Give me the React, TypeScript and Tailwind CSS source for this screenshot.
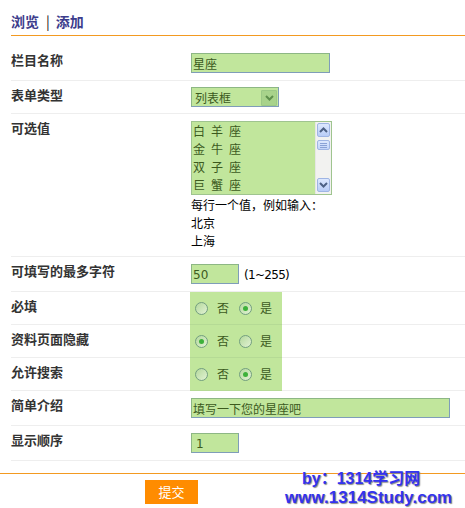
import type { ReactNode } from 'react'

const labelCls = 'w-[180px] shrink-0 pt-[6px] text-[13px] leading-[15px] font-bold text-[#333333]'
const rowCls = 'flex border-b border-[#eeeeee]'
const fieldCls =
  'h-[20px] flex items-center pl-[1px] pt-[1px] border border-t-[#8db784] border-l-[#8db784] border-b-[#7f9db9] border-r-[#7f9db9] bg-[#c1e69c] text-[12px] leading-[16px] text-[#3c5a1e]'

const zodiac = ['白羊座', '金牛座', '双子座', '巨蟹座']

const Radio = ({ checked }: { checked?: boolean }) => (
  <span className="flex h-[13px] w-[13px] items-center justify-center rounded-full border border-[#739e80] bg-gradient-to-br from-[#b4d99c] to-[#e2f2d4]">
    {checked && <span className="h-[5px] w-[5px] rounded-full bg-[#3db13a]" />}
  </span>
)

const RadioRow = ({ label, yes }: { label: string; yes: boolean }) => (
  <div className={`${rowCls} h-[33px]`}>
    <div className={labelCls}>{label}</div>
    <div className="-mb-px -ml-px flex w-[92px] items-center self-stretch border-b border-[#b5da95] bg-[#c1e69c] pl-[5px] text-[12px] text-[#3c5a1e]">
      <Radio checked={!yes} />
      <span className="ml-[9px]">否</span>
      <span className="ml-[10px]">
        <Radio checked={yes} />
      </span>
      <span className="ml-[8px]">是</span>
    </div>
  </div>
)

const Row = ({ label, className, children }: { label: string; className: string; children: ReactNode }) => (
  <div className={`${rowCls} ${className}`}>
    <div className={labelCls}>{label}</div>
    <div className="pt-[7px]">{children}</div>
  </div>
)

const Chevron = ({ up, color }: { up?: boolean; color: string }) => (
  <svg width="9" height="6" viewBox="0 0 9 6">
    <polyline
      points={up ? '1,5 4.5,1.5 8,5' : '1,1 4.5,4.5 8,1'}
      fill="none"
      stroke={color}
      strokeWidth="2"
    />
  </svg>
)

const ScrollBtn = ({ up }: { up?: boolean }) => (
  <div className="mx-[1px] flex h-[14px] items-center justify-center rounded-[2px] border border-[#9fb5e4] bg-gradient-to-b from-[#dde8fe] to-[#b9cdf7]">
    <Chevron up={up} color="#4d6185" />
  </div>
)

export default function App() {
  return (
    <div className="relative h-[508px] w-[465px] overflow-hidden bg-white font-['Noto_Sans_CJK_SC',sans-serif]">
      {/* 标题 */}
      <div className="ml-[11px] flex h-[35px] items-start pt-[13px] text-[14px] leading-[16px] font-bold text-[#3d3d8c]">
        <span>浏览</span>
        <span className="ml-[7px] font-normal text-[#111111]">|</span>
        <span className="ml-[6px]">添加</span>
      </div>
      <div className="ml-[11px] h-px bg-[#f39a21]" />

      <div className="ml-[11px] mt-[10px]">
        <Row label="栏目名称" className="h-[35px]">
          <div className={`${fieldCls} w-[139px]`}>星座</div>
        </Row>

        <div className={`${rowCls} h-[33px]`}>
          <div className={labelCls}>表单类型</div>
          <div className="pt-[6px]">
            <div className={`${fieldCls} w-[88px] justify-between pl-[3px] pr-px pt-0`}>
              <span>列表框</span>
              <span className="flex h-[16px] w-[16px] items-center justify-center rounded-[1px] border border-[#9cc986] bg-[#a8d38b]">
                <Chevron color="#5e8f4c" />
              </span>
            </div>
          </div>
        </div>

        <Row label="可选值" className="h-[143px]">
          <div className="flex h-[74px] w-[141px] border border-[#9fc48f] bg-[#c1e69c]">
            <div className="flex-1 pl-px text-[12px] leading-[18px] tracking-[6px] text-[#3c5a1e]">
              {zodiac.map((z) => (
                <div key={z}>{z}</div>
              ))}
            </div>
            <div className="flex w-[16px] flex-col border-l border-[#e6e6e6] bg-[#f2f2f0]">
              <div className="mt-[1px]">
                <ScrollBtn up />
              </div>
              <div className="mx-[1px] mt-[3px] flex h-[10px] flex-col items-center justify-center gap-[1px] rounded-[2px] border border-[#9fb5e4] bg-gradient-to-b from-[#dde8fe] to-[#c3d5fa]">
                <span className="h-px w-[7px] bg-[#8aa2d6]" />
                <span className="h-px w-[7px] bg-[#8aa2d6]" />
                <span className="h-px w-[7px] bg-[#8aa2d6]" />
              </div>
              <div className="flex-1" />
              <div className="mb-[2px]">
                <ScrollBtn />
              </div>
            </div>
          </div>
          <div className="mt-[1px] text-[12px] leading-[18px] text-black">
            <div>每行一个值，例如输入：</div>
            <div>北京</div>
            <div>上海</div>
          </div>
        </Row>

        <Row label="可填写的最多字符" className="h-[35px]">
          <div className="flex items-center">
            <div className={`${fieldCls} w-[48px] font-['DejaVu_Sans'] pl-[1px]`}>50</div>
            <span className="ml-[5px] pt-[2px] font-['DejaVu_Sans'] text-[12px] tracking-[-0.7px] text-black">
              (1~255)
            </span>
          </div>
        </Row>

        <RadioRow label="必填" yes />
        <RadioRow label="资料页面隐藏" yes={false} />
        <RadioRow label="允许搜索" yes />

        <Row label="简单介绍" className="h-[35px]">
          <div className={`${fieldCls} w-[259px]`}>填写一下您的星座吧</div>
        </Row>

        <Row label="显示顺序" className="h-[35px]">
          <div className={`${fieldCls} w-[48px] pl-[4px] font-['DejaVu_Sans']`}>1</div>
        </Row>
      </div>

      {/* 提交 */}
      <div className="mt-[12px] h-px bg-[#f39a21]" />
      <div className="pt-[6px]">
        <button className="ml-[145px] flex h-[24px] w-[53px] items-center justify-center bg-[#ff8c00] text-[13px] text-white">
          提交
        </button>
      </div>

      {/* 水印 */}
      <div className="absolute left-[285px] top-[470px] font-['Liberation_Sans','Noto_Sans_CJK_SC',sans-serif] font-bold text-[#3333ee] [text-shadow:1px_1px_1px_#8a8a8a]">
        <div className="pl-[17px] text-[16px] leading-[18px]">by：1314学习网</div>
        <div className="text-[17px] leading-[20px] whitespace-nowrap">www.1314Study.com</div>
      </div>
    </div>
  )
}
